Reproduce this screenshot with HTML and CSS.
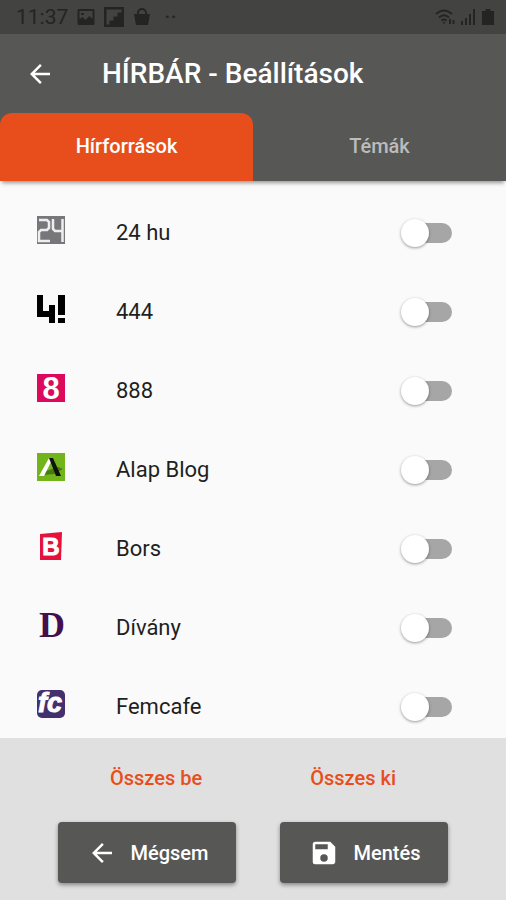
FILE: index.html
```html
<!DOCTYPE html>
<html lang="hu">
<head>
<meta charset="UTF-8" />
<meta name="viewport" content="width=device-width, initial-scale=1" />
<title>HÍRBÁR - Beállítások</title>
<link rel="stylesheet" href="styles.css">
</head>
<body>
  <div class="app">
    <!-- Állapotsor -->
    <div class="statusbar">
      <span class="clock">11:37</span>
      <svg class="status-icon" width="18" height="18" viewBox="0 0 18 18">
        <path fill-rule="evenodd" d="M2 1h14a1.500 1.500 0 0 1 1.500 1.500v13a1.500 1.500 0 0 1-1.500 1.500H2a1.500 1.500 0 0 1-1.500-1.500v-13A1.500 1.500 0 0 1 2 1zM2.500 3v8l3-2 3 3 4-4 3 3V3zM4 5h3v2H4z" />
      </svg>
      <svg class="status-icon" width="20" height="20" viewBox="0 0 20 20">
        <path fill-rule="evenodd" d="M0 0h20v20H0zM2.500 2.500v15h3v-4h4v-4h4v-4h4v-3z" />
      </svg>
      <svg class="status-icon" width="18" height="18" viewBox="0 0 18 18">
        <path d="M1 6h16l-2 11H3z" />
        <path class="line" d="M5 7V5a4 4 0 0 1 8 0v2" />
      </svg>
      <span class="dots">··</span>
      <span class="signals">
        <svg class="status-icon" width="20" height="18" viewBox="0 0 20 18">
          <path class="line" d="M1 6Q9-1 17 6M4 9.500Q9 5 14 9.500M6.500 12.500Q9 10.500 11.500 12.500" />
          <path d="M7.500 14h3L9 16zM14 11h2v5h-2zM17.500 12h2v4h-2z" />
        </svg>
        <svg class="status-icon" width="17" height="18" viewBox="0 0 17 18">
          <path d="M1 13h2v4H1zM5 10h2v7H5zM9 6h2v11H9zM13 1h2v16h-2z" />
        </svg>
        <svg class="status-icon" width="12" height="18" viewBox="0 0 12 18">
          <path d="M3.500 1h5v2H12v14H0V3h3.500z" />
        </svg>
      </span>
    </div>

    <header class="appbar">
      <button type="button" class="back" aria-label="Vissza">
        <svg class="icon" viewBox="0 0 24 24"><path d="M20 11H7.830l5.590-5.590L12 4l-8 8 8 8 1.410-1.410L7.830 13H20z" /></svg>
      </button>
      <h1>HÍRBÁR - Beállítások</h1>
    </header>

    <nav class="tabs" role="tablist">
      <button type="button" class="tab active" role="tab" aria-selected="true">Hírforrások</button>
      <button type="button" class="tab" role="tab" aria-selected="false">Témák</button>
    </nav>

    <!-- Hírforrások listája -->
    <main class="list">
      <label class="row" for="src24">
        <svg class="logo" viewBox="0 0 28 28">
          <rect width="28" height="28" fill="#77777b" />
          <path d="M2 4h8l2 2v6l-2 2H4l-2 2v9h11M16 3v10l2 2h8M25.500 3v23" fill="none" stroke="#eee" stroke-width="2.500" />
        </svg>
        <span class="name">24 hu</span>
        <input type="checkbox" role="switch" class="switch" id="src24" />
      </label>
      <label class="row" for="src444">
        <svg class="logo" viewBox="0 0 28 28">
          <rect x="0" y="0" width="6" height="22" />
          <rect x="0" y="16" width="18" height="6" />
          <rect x="12" y="10" width="6" height="18" />
          <rect x="21" y="0" width="7" height="20" />
          <rect x="21" y="23" width="7" height="5" />
        </svg>
        <span class="name">444</span>
        <input type="checkbox" role="switch" class="switch" id="src444" />
      </label>
      <label class="row" for="src888">
        <svg class="logo" viewBox="0 0 28 28">
          <rect width="28" height="28" fill="#dc0a5c" />
          <text x="14" y="25" class="mark eight">8</text>
        </svg>
        <span class="name">888</span>
        <input type="checkbox" role="switch" class="switch" id="src888" />
      </label>
      <label class="row" for="srcAlap">
        <svg class="logo" viewBox="0 0 28 28">
          <rect width="28" height="28" fill="#72b51a" />
          <path d="M6 19l15-5 5 2-9 5-11 1z" fill="#477b12" />
          <path d="M12 5h4L7 23H2z" fill="#fff" />
          <path d="M12 5h4l8 18h-5z" fill="#111" />
        </svg>
        <span class="name">Alap Blog</span>
        <input type="checkbox" role="switch" class="switch" id="srcAlap" />
      </label>
      <label class="row" for="srcBors">
        <svg class="logo" viewBox="0 0 28 28">
          <path d="M3 2l22-2-1 28H3z" fill="#e4123c" />
          <text x="14" y="23" class="mark bors">B</text>
        </svg>
        <span class="name">Bors</span>
        <input type="checkbox" role="switch" class="switch" id="srcBors" />
      </label>
      <label class="row" for="srcDivany">
        <svg class="logo" viewBox="0 0 28 28">
          <text x="15" y="26" class="mark divany">D</text>
        </svg>
        <span class="name">Dívány</span>
        <input type="checkbox" role="switch" class="switch" id="srcDivany" />
      </label>
      <label class="row" for="srcFemcafe">
        <svg class="logo" viewBox="0 0 28 28">
          <rect width="28" height="28" rx="5" fill="#43306d" />
          <text x="13" y="22" class="mark femcafe">fc</text>
        </svg>
        <span class="name">Femcafe</span>
        <input type="checkbox" role="switch" class="switch" id="srcFemcafe" />
      </label>
    </main>

    <footer class="bottom">
      <div class="links">
        <button type="button" class="flat" id="allOn">Összes be</button>
        <button type="button" class="flat" id="allOff">Összes ki</button>
      </div>
      <div class="actions">
        <button type="button" class="raised">
          <svg class="icon" viewBox="0 0 24 24"><path d="M20 11H7.830l5.590-5.590L12 4l-8 8 8 8 1.410-1.410L7.830 13H20z" /></svg>
          Mégsem
        </button>
        <button type="button" class="raised">
          <svg class="icon" viewBox="0 0 24 24"><path d="M17 3H5a2 2 0 0 0-2 2v14a2 2 0 0 0 2 2h14c1.100 0 2-.9 2-2V7zM12 19a3 3 0 1 1 0-6 3 3 0 0 1 0 6zM15 9H5V5h10z" /></svg>
          Mentés
        </button>
      </div>
    </footer>
  </div>

<script>
  const switches = document.querySelectorAll('.switch');

  function setAll(value) {
    switches.forEach((s) => { s.checked = value; });
  }

  document.getElementById('allOn').addEventListener('click', () => setAll(true));
  document.getElementById('allOff').addEventListener('click', () => setAll(false));
</script>
</body>
</html>
```
FILE: styles.css
```css
:root {
  --narancs: #e84e1b;
  --szurke: #575756;
  --szurke-sotet: #434341;
  --hatter: #fafafa;
}
* {
  box-sizing: border-box;
}
body {
  margin: 0;
  font-family: Roboto, sans-serif;
  background-color: var(--hatter);
  color: #1f1f1f;
}
button {
  font: inherit;
  border: none;
  background: none;
  padding: 0;
  cursor: pointer;
}
.app {
  display: flex;
  flex-direction: column;
  height: 100vh;
}
.statusbar {
  display: flex;
  align-items: center;
  gap: 9px;
  height: 34px;
  flex-shrink: 0;
  padding: 0 12px 0 16px;
  background-color: var(--szurke-sotet);
  color: #242422;
}
.clock {
  font-size: 21px;
}
.status-icon {
  fill: #242422;
}
.line {
  fill: none;
  stroke: #242422;
  stroke-width: 2;
}
.dots {
  font-size: 24px;
  padding-left: 4px;
}
.signals {
  display: flex;
  gap: 5px;
  margin-left: auto;
}
.appbar {
  display: flex;
  align-items: center;
  gap: 47px;
  height: 79px;
  flex-shrink: 0;
  padding: 0 25px;
  background-color: var(--szurke);
  color: white;
}
.back {
  display: flex;
  color: white;
}
.icon {
  width: 30px;
  height: 30px;
  fill: currentColor;
}
h1 {
  margin: 0;
  font-size: 28px;
  font-weight: 500;
}
.tabs {
  display: flex;
  height: 68px;
  flex-shrink: 0;
  background-color: var(--szurke);
  /* csak lefelé vet árnyékot */
  box-shadow: 0 4px 4px -2px rgba(0,0,0,0.4);
  z-index: 1;
}
.tab {
  flex: 1;
  padding-bottom: 2px;
  font-size: 20px;
  font-weight: 500;
  color: #bcbcbb;
}
.tab.active {
  background-color: var(--narancs);
  color: white;
  border-radius: 12px 12px 0 0;
}
.list {
  flex: 1;
  min-height: 0;
  overflow-y: auto;
  scrollbar-width: none;
  padding-top: 12px;
}
.row {
  display: flex;
  align-items: center;
  height: 79px;
  padding: 0 54px 0 37px;
  cursor: pointer;
}
.logo {
  width: 28px;
  height: 28px;
  margin: 0 51px 6px 0;
  overflow: visible;
}
.mark {
  text-anchor: middle;
  font-weight: 700;
  fill: white;
}
.eight {
  font-family: "Liberation Sans", sans-serif;
  font-size: 31px;
}
.bors {
  font-family: "Liberation Sans", sans-serif;
  font-size: 24px;
  stroke: white;
  stroke-width: 1;
}
.divany {
  font-family: "Liberation Serif", serif;
  font-size: 36px;
  fill: #43104f;
}
.femcafe {
  font-family: "Liberation Sans", sans-serif;
  font-size: 27px;
  font-style: italic;
  stroke: white;
  stroke-width: 1;
}
.name {
  flex: 1;
  font-size: 22px;
}
.switch {
  appearance: none;
  display: flex;
  align-items: center;
  width: 46px;
  height: 20px;
  margin: 0;
  border-radius: 10px;
  background-color: #a6a6a6;
  cursor: pointer;
}
.switch::before {
  content: "";
  width: 28px;
  height: 28px;
  flex-shrink: 0;
  margin-left: -5px;
  border-radius: 50%;
  background-color: white;
  box-shadow: 0 1px 3px rgba(0,0,0,0.4);
}
.switch:checked {
  background-color: #f3a68d;
}
.switch:checked::before {
  margin-left: 23px;
  background-color: var(--narancs);
}
.bottom {
  flex-shrink: 0;
  padding: 20px 16px 17px;
  background-color: #e0e0e0;
}
.links, .actions {
  display: flex;
  justify-content: center;
}
.links {
  gap: 108px;
  margin-bottom: 24px;
}
.flat {
  height: 40px;
  font-size: 20px;
  font-weight: 500;
  color: var(--narancs);
}
.actions {
  gap: 44px;
}
.raised {
  display: flex;
  align-items: center;
  gap: 14px;
  height: 61px;
  padding: 0 28px 0 29px;
  border-radius: 4px;
  background-color: var(--szurke);
  color: white;
  font-size: 20px;
  font-weight: 500;
  box-shadow: 0 2px 4px rgba(0,0,0,0.4);
}
```
